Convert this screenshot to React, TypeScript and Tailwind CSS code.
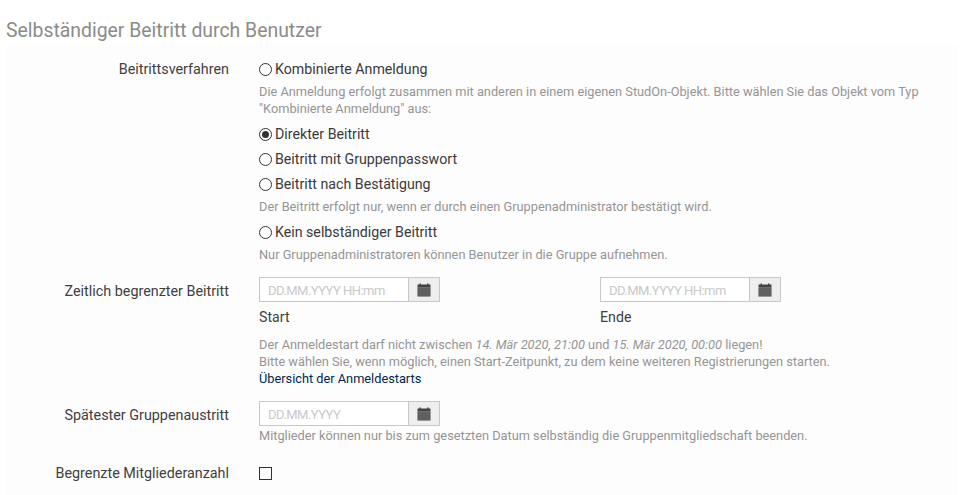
import React from "react";

function Cal() {
  return (
    <svg width="14" height="14" viewBox="0 0 14 14" className="block">
      <path d="M0.5 1.5H2.5V0.5H4V1.5H10V0.5H11.5V1.5H13.5V4.5H0.5Z" fill="#444444" />
      <path d="M0.5 4.5H13.5V13.5H0.5Z" fill="#444444" />
      <g fill="#b5b5b5">
        {[5.5, 7.5, 9.5, 11.5].map((y) =>
          [1.5, 3.5, 5.5, 7.5, 9.5, 11.5].map((x) => <rect key={x + "-" + y} x={x} y={y} width="1" height="1" />)
        )}
      </g>
    </svg>
  );
}

function DateInput({ placeholder }: { placeholder: string }) {
  return (
    <div className="flex h-[25px] w-[181px] border border-[#c8c8c8] bg-white">
      <div className="flex-1 pl-[8px] text-[13px] leading-[25px] tracking-[-0.53px] text-[#c9c9c9]">{placeholder}</div>
      <div className="flex w-[31px] items-center justify-center border-l border-[#c8c8c8] bg-[#eeeeee]">
        <Cal />
      </div>
    </div>
  );
}

function Radio({ label, checked, className }: { label: string; checked?: boolean; className?: string }) {
  return (
    <div className={"flex h-[20px] items-center text-[14.2px] leading-[20px] text-[#3a3a3a] " + (className ?? "")}>
      <span className="mr-[3px] flex h-[13px] w-[13px] items-center justify-center rounded-full border border-[#333333] bg-white">
        {checked && <span className="h-[7px] w-[7px] rounded-full bg-[#333333]" />}
      </span>
      {label}
    </div>
  );
}

function Help({ children, className }: { children: React.ReactNode; className?: string }) {
  return <div className={"text-[12.78px] leading-[17px] text-[#959595] " + (className ?? "")}>{children}</div>;
}

function Row({ label, labelClass, children, className }: { label: string; labelClass?: string; children: React.ReactNode; className?: string }) {
  return (
    <div className={"flex " + (className ?? "")}>
      <div className={"w-[223px] shrink-0 text-right text-[14.35px] leading-[20px] text-[#3f3f3f] " + (labelClass ?? "")}>{label}</div>
      <div className="ml-[30px] min-w-0 flex-1">{children}</div>
    </div>
  );
}

export default function App() {
  return (
    <div className="h-[495px] w-[975px] overflow-hidden bg-white font-['Roboto',sans-serif]">
      <h3 className="pl-[6px] pt-[19px] text-[19.4px] leading-[24px] font-normal text-[#8b8b8b]">
        Selbständiger Beitritt durch Benutzer
      </h3>
      <div className="ml-[6px] mt-[3px] h-[460px] w-[951px] bg-[#fdfdfd] pt-[13px]">
        <Row label="Beitrittsverfahren" labelClass="pt-[1px]">
          <Radio label="Kombinierte Anmeldung" />
          <Help className="mt-[4px] w-[680px]">
            Die Anmeldung erfolgt zusammen mit anderen in einem eigenen StudOn-Objekt. Bitte wählen Sie das Objekt vom Typ "Kombinierte Anmeldung" aus:
          </Help>
          <Radio label="Direkter Beitritt" checked className="mt-[7px]" />
          <Radio label="Beitritt mit Gruppenpasswort" className="mt-[5px]" />
          <Radio label="Beitritt nach Bestätigung" className="mt-[5px]" />
          <Help className="mt-[4px]">Der Beitritt erfolgt nur, wenn er durch einen Gruppenadministrator bestätigt wird.</Help>
          <Radio label="Kein selbständiger Beitritt" className="mt-[7px]" />
          <Help className="mt-[4px]">Nur Gruppenadministratoren können Benutzer in die Gruppe aufnehmen.</Help>
        </Row>
        <Row label="Zeitlich begrenzter Beitritt" labelClass="pt-[5px]" className="mt-[14px]">
          <div className="flex">
            <div className="w-[341px]">
              <DateInput placeholder="DD.MM.YYYY HH:mm" />
              <div className="mt-[5px] text-[14.2px] leading-[20px] text-[#3f3f3f]">Start</div>
            </div>
            <div>
              <DateInput placeholder="DD.MM.YYYY HH:mm" />
              <div className="mt-[5px] text-[14.2px] leading-[20px] text-[#3f3f3f]">Ende</div>
            </div>
          </div>
          <Help className="mt-[9px]">
            Der Anmeldestart darf nicht zwischen <i>14. Mär 2020, 21:00</i> und <i>15. Mär 2020, 00:00</i> liegen!
            <br />
            Bitte wählen Sie, wenn möglich, einen Start-Zeitpunkt, zu dem keine weiteren Registrierungen starten.
            <br />
            <span className="text-[#00274f]">Übersicht der Anmeldestarts</span>
          </Help>
        </Row>
        <Row label="Spätester Gruppenaustritt" labelClass="pt-[5px]" className="mt-[14px]">
          <DateInput placeholder="DD.MM.YYYY" />
          <Help className="mt-[1px]">Mitglieder können nur bis zum gesetzten Datum selbständig die Gruppenmitgliedschaft beenden.</Help>
        </Row>
        <Row label="Begrenzte Mitgliederanzahl" className="mt-[20px]">
          <div className="mt-[3px] h-[13px] w-[13px] border border-[#333333] bg-white" />
        </Row>
      </div>
    </div>
  );
}
